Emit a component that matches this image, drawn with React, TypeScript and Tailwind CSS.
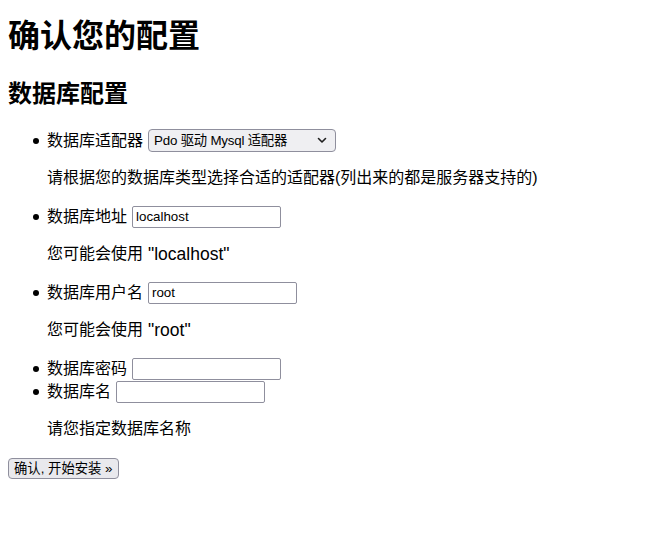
import React from 'react';

const font = { fontFamily: '"Liberation Sans", "Noto Sans CJK SC", sans-serif' };

type Field = {
  label: string;
  value?: string;
  width: string;
  select?: boolean;
  hint?: string;
  quoted?: string;
};

const fields: Field[] = [
  {
    label: '数据库适配器',
    value: 'Pdo 驱动 Mysql 适配器',
    width: 'w-[188px]',
    select: true,
    hint: '请根据您的数据库类型选择合适的适配器(列出来的都是服务器支持的)',
  },
  { label: '数据库地址', value: 'localhost', width: 'w-[149px]', hint: '您可能会使用', quoted: '"localhost"' },
  { label: '数据库用户名', value: 'root', width: 'w-[149px]', hint: '您可能会使用', quoted: '"root"' },
  { label: '数据库密码', value: '', width: 'w-[149px]' },
  { label: '数据库名', value: '', width: 'w-[149px]', hint: '请您指定数据库名称' },
];

function Chevron() {
  return (
    <svg width="10" height="7" viewBox="0 0 10 7" fill="none">
      <path d="M1.5 1.5 5 5l3.5-3.5" stroke="#1f1f1f" strokeWidth="1.6" strokeLinecap="round" strokeLinejoin="round" />
    </svg>
  );
}

export default function App() {
  return (
    <div className="min-h-[544px] bg-white px-[8px] text-black" style={font}>
      <h1 className="mt-[20px] text-[32px] font-bold leading-[32px]">确认您的配置</h1>
      <h2 className="mt-[28px] text-[24px] font-bold leading-[28px]">数据库配置</h2>

      <ul className="mt-[21px]">
        {fields.map((f) => (
          <li key={f.label} className="pl-[25px]">
            <div className="flex h-[23px] items-center text-[16px]">
              <span className="mr-[8px] h-[6px] w-[6px] rounded-full bg-black" />
              <label>{f.label}</label>
              {f.select ? (
                <span
                  className={`ml-[5px] flex h-[23px] ${f.width} items-center justify-between rounded-[4px] border border-[#8f8f9d] bg-[#efeff2] pl-[5px] pr-[8px] text-[13.33px]`}
                >
                  <span className="tracking-[-0.2px]">{f.value}</span>
                  <Chevron />
                </span>
              ) : (
                <input
                  readOnly
                  value={f.value}
                  className={`ml-[5px] h-[22px] ${f.width} rounded-[2px] border border-[#8f8f9d] bg-white px-[3px] text-[13.33px] outline-none`}
                  style={font}
                />
              )}
            </div>
            {f.hint && (
              <p className="mb-[16px] mt-[15px] flex h-[22px] items-center pl-[14px] text-[16px]">
                {f.hint}
                {f.quoted && <span className="ml-[5px] text-[17.5px]">{f.quoted}</span>}
              </p>
            )}
          </li>
        ))}
      </ul>

      <button
        className="mt-[1px] h-[21px] rounded-[4px] border border-[#8f8f9d] bg-[#e9e9ed] px-[5px] text-[13.33px] leading-[19px]"
        style={font}
      >
        确认, 开始安装 »
      </button>
    </div>
  );
}
